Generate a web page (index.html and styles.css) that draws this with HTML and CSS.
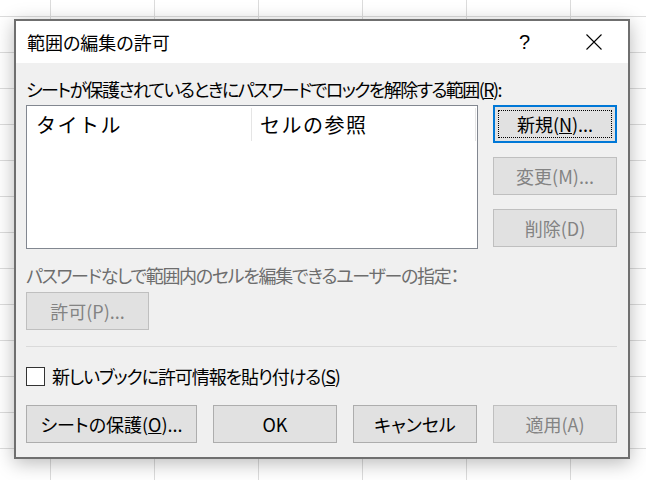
FILE: index.html
```html
<!DOCTYPE html>
<html lang="ja">
<head>
    <meta charset="UTF-8">
    <meta name="viewport" content="width=device-width, initial-scale=1.0">
    <title>範囲の編集の許可</title>
    <link rel="stylesheet" href="styles.css">
</head>
<body>
    <div class="dialogo">
        <div class="barra">
            <div class="titulo">範囲の編集の許可</div>
            <div class="controle ajuda">?</div>
            <div class="controle">
                <svg width="16" height="16" viewBox="0 0 16 16">
                    <path d="M0.5 0.5 L15.5 15.5 M15.5 0.5 L0.5 15.5" stroke="#000" stroke-width="1.1" fill="none"/>
                </svg>
            </div>
        </div>

        <div class="conteudo">
            <p class="rotulo">シートが保護されているときにパスワードでロックを解除する範囲(<u>R</u>):</p>

            <div class="linha">
                <div class="lista">
                    <div class="cabecalho">
                        <div class="coluna col1">タイトル</div>
                        <div class="coluna col2">セルの参照</div>
                    </div>
                </div>
                <div class="lateral">
                    <button class="botao foco"><span class="pontilhado">新規(<u>N</u>)...</span></button>
                    <button class="botao" disabled>変更(M)...</button>
                    <button class="botao" disabled>削除(D)</button>
                </div>
            </div>

            <p class="rotulo cinza">パスワードなしで範囲内のセルを編集できるユーザーの指定：</p>
            <button class="botao permitir" disabled>許可(P)...</button>

            <div class="separador"></div>

            <label class="marcar">
                <span class="caixa"></span>
                <span>新しいブックに許可情報を貼り付ける(<u>S</u>)</span>
            </label>

            <div class="rodape">
                <button class="botao largo">シートの保護(<u>O</u>)...</button>
                <button class="botao">OK</button>
                <button class="botao">キャンセル</button>
                <button class="botao" disabled>適用(A)</button>
            </div>
        </div>
    </div>
</body>
</html>
```

FILE: styles.css
```css
*{
    margin: 0;
    padding: 0;
    box-sizing: border-box;
}
body{
    width: 646px;
    height: 480px;
    overflow: hidden;
    padding: 19px 0 0 14px;
    font-family: "Noto Sans CJK JP", "Noto Sans", sans-serif;
    font-feature-settings: "palt";
    font-size: 18px;
    color: #000;
    background-color: #fff;
    background-image:
        linear-gradient(to right, #dcdcdc 1px, transparent 1px),
        linear-gradient(to bottom, #dcdcdc 1px, transparent 1px);
    background-size: 104px 100%, 100% 36px;
    background-position: 50px 0, 0 16px;
}
.dialogo{
    width: 616px;
    height: 440px;
    border: 2px solid #6f6f6f;
    background-color: #f0f0f0;
    box-shadow: 0 4px 18px rgba(0, 0, 0, 0.28);
}
.barra{
    height: 42px;
    background-color: #fff;
    display: flex;
    align-items: center;
}
.titulo{
    flex: 1;
    padding-left: 11px;
    line-height: 24px;
}
.controle{
    width: 69px;
    height: 42px;
    display: flex;
    align-items: center;
    justify-content: center;
}
.ajuda{
    font-family: "Liberation Sans", sans-serif;
    font-size: 20px;
    font-weight: 300;
}
.conteudo{
    padding: 0 11px 0 10px;
}
.rotulo{
    line-height: 24px;
    margin-top: 14px;
    letter-spacing: -1.6px;
}
.cinza{
    color: #6d6d6d;
    letter-spacing: -1.3px;
}
.linha{
    display: flex;
    gap: 15px;
    margin-top: 4px;
}
.lista{
    width: 452px;
    height: 144px;
    border: 1px solid #828790;
    background-color: #fff;
}
.cabecalho{
    display: flex;
    height: 36px;
    font-feature-settings: normal;
    font-size: 20px;
    letter-spacing: 1.5px;
}
.coluna{
    display: flex;
    align-items: center;
    border-right: 1px solid #e5e5e5;
    margin: 2px 0 1px;
}
.col1{
    width: 225px;
    padding-left: 9px;
}
.col2{
    width: 224px;
    padding-left: 8px;
}
.lateral{
    width: 124px;
    display: flex;
    flex-direction: column;
    gap: 14px;
}
.botao{
    height: 38px;
    width: 124px;
    font-family: inherit;
    font-size: 18px;
    font-feature-settings: "palt";
    color: #000;
    background-color: #e1e1e1;
    border: 1px solid #adadad;
    display: flex;
    align-items: center;
    justify-content: center;
}
.botao:disabled{
    color: #838383;
    border-color: #bfbfbf;
}
.foco{
    border: 2px solid #0078d7;
    padding: 3px;
}
.pontilhado{
    width: 100%;
    height: 100%;
    border: 1px dotted #000;
    display: flex;
    align-items: center;
    justify-content: center;
}
.permitir{
    width: 123px;
    margin-top: 5px;
}
.separador{
    height: 1px;
    background-color: #dadada;
    margin-top: 16px;
}
.marcar{
    display: flex;
    align-items: center;
    gap: 7px;
    height: 24px;
    margin-top: 17px;
    letter-spacing: -1.1px;
}
.caixa{
    width: 19px;
    height: 19px;
    border: 1px solid #333;
    background-color: #fff;
}
.rodape{
    display: flex;
    gap: 16px;
    margin-top: 17px;
}
.largo{
    width: 171px;
}
```
